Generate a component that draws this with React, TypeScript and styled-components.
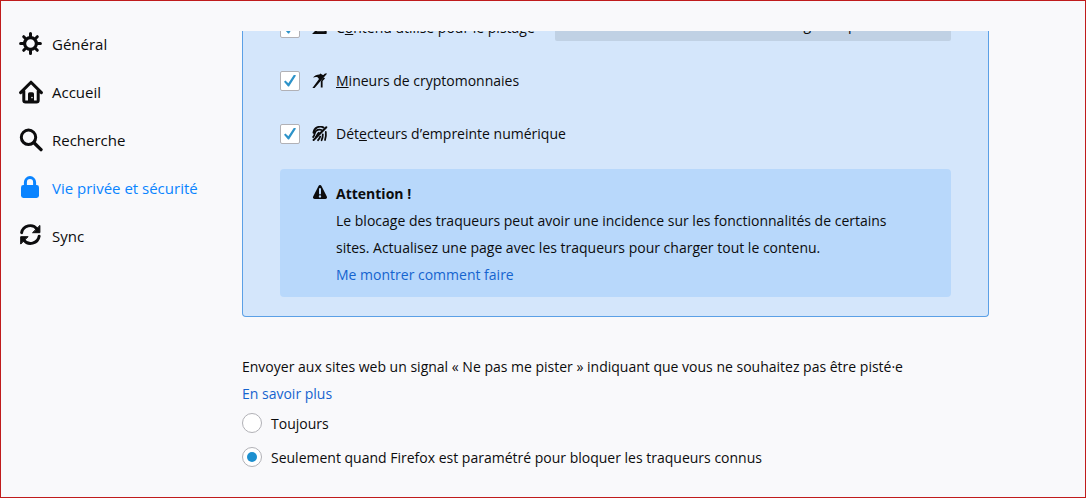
import React from "react";
import styled, { createGlobalStyle } from "styled-components";

const GlobalStyle = createGlobalStyle`
  * { box-sizing: border-box; }
  body {
    margin: 0;
    background: #f9f9fb;
    color: #0c0c0d;
    font-family: "Segoe UI", "Open Sans", "Noto Sans", sans-serif;
    font-size: 14px;
    line-height: 27px;
  }
`;

const Page = styled.div`
  display: flex;
  min-height: 100vh;
  border: 1px solid #c01c1c;
`;

const Sidebar = styled.nav`
  flex: 0 0 241px;
  display: flex;
  flex-direction: column;
  padding: 19px 0 0 18px;
`;

const NavLink = styled.a<{ $active?: boolean }>`
  display: flex;
  align-items: center;
  gap: 9px;
  height: 48px;
  font-size: 15px;
  text-decoration: none;
  color: ${(p) => (p.$active ? "#0a84ff" : "#0c0c0d")};
`;

const Main = styled.main`
  flex: 1;
  min-width: 0;
  padding: 30px 96px 20px 0;
`;

const Panel = styled.section`
  overflow: hidden;
  padding: 0 37px 19px;
  border: 1px solid #5ba0e6;
  border-top: 0;
  border-radius: 0 0 4px 4px;
  background: #d4e6fb;
`;

const OptionList = styled.div`
  margin-top: -30px;
`;

const Option = styled.div`
  display: flex;
  align-items: center;
  height: 53px;
`;

const Label = styled.label`
  display: flex;
  align-items: center;
  gap: 8px;
`;

const Checkbox = styled.input`
  appearance: none;
  flex: none;
  width: 20px;
  height: 20px;
  margin: 0 12px 0 0;
  border: 1px solid #b1b1b6;
  border-radius: 2px;
  background: #fff;
  display: grid;
  place-items: center;

  &:checked::before {
    content: "";
    width: 12px;
    height: 12px;
    background: #2e93c9;
    clip-path: polygon(0 60%, 12% 49%, 36% 73%, 84% 0, 100% 9%, 42% 100%, 34% 100%);
  }
`;

const Select = styled.select`
  appearance: none;
  flex: 0 1 396px;
  min-width: 0;
  height: 32px;
  margin: 0 0 6px auto;
  padding: 0 0 0 85px;
  border: 0;
  border-radius: 2px;
  background: #c0d1e4;
  color: #0c0c0d;
  font: inherit;
  line-height: 24px;
`;

const Callout = styled.div`
  display: flex;
  gap: 8px;
  margin-top: 9px;
  padding: 11px 40px 9px 32px;
  border-radius: 4px;
  background: #b8d8fb;

  svg { flex: none; margin-top: 4px; }
  p { margin: 0; }
`;

const CalloutTitle = styled.strong`
  display: block;
  font-weight: 700;
`;

const Link = styled.a`
  color: #1564cf;
  text-decoration: none;
`;

const Tracking = styled.fieldset`
  margin: 36px 0 0;
  padding: 0;
  border: 0;
`;

const Legend = styled.legend`
  padding: 0;
`;

const RadioGroup = styled.div`
  display: flex;
  flex-direction: column;
  gap: 2px;
`;

const RadioLabel = styled.label`
  display: flex;
  align-items: center;
  gap: 9px;
  height: 32px;
`;

const Radio = styled.input`
  appearance: none;
  flex: none;
  width: 20px;
  height: 20px;
  margin: 0;
  border: 1px solid #b1b1b6;
  border-radius: 50%;
  background: #fff;
  display: grid;
  place-items: center;

  &:checked::before {
    content: "";
    width: 10px;
    height: 10px;
    border-radius: 50%;
    background: #1c8fcf;
  }
`;

const Svg = ({ size, children }: { size: number; children: React.ReactNode }) => (
  <svg width={size} height={size} viewBox={`0 0 ${size} ${size}`} fill="none" stroke="currentColor"
    strokeLinecap="round" strokeLinejoin="round" aria-hidden="true">
    {children}
  </svg>
);

const GearIcon = () => (
  <Svg size={24}>
    <circle cx="11.5" cy="11.5" r="5.9" strokeWidth="3.2" />
    <path strokeWidth="3" d="M11.5 1.6v3M11.5 18.4v3M1.6 11.5h3M18.4 11.5h3M4.7 4.7l1.8 1.8M16.5 16.5l1.8 1.8M4.7 18.3l1.8-1.8M16.5 6.5l1.8-1.8" />
  </Svg>
);

const HomeIcon = () => (
  <Svg size={24}>
    <path strokeWidth="3" d="M1.6 12.6 12 2.2l10.4 10.4M4.8 11v9.2a1.7 1.7 0 0 0 1.7 1.7h11a1.7 1.7 0 0 0 1.7-1.7V11" />
    <path fill="currentColor" stroke="none" d="M9 22v-8.2a1.6 1.6 0 0 1 1.6-1.6h2.8a1.6 1.6 0 0 1 1.6 1.6V22z" />
    <circle cx="13" cy="17.6" r="0.8" fill="#f9f9fb" stroke="none" />
  </Svg>
);

const SearchIcon = () => (
  <Svg size={24}>
    <circle cx="9.5" cy="9.3" r="7.2" strokeWidth="3" />
    <path strokeWidth="3.4" d="m15 14.8 7 6.8" />
  </Svg>
);

const LockIcon = () => (
  <Svg size={24}>
    <path strokeWidth="3" strokeLinecap="butt" d="M6.4 11V6.2a4.6 4.6 0 0 1 9.2 0V11" />
    <rect x="2" y="9" width="18" height="13" rx="2.4" fill="currentColor" stroke="none" />
  </Svg>
);

const SyncIcon = () => (
  <Svg size={24}>
    <path strokeWidth="2.9" d="M2.6 8.7a8.7 8.7 0 0 1 15.6-3.4M20.2 12.1a8.7 8.7 0 0 1-15.6 3.8" />
    <path fill="currentColor" strokeWidth="1" d="M20.9 1.8v6.9h-7zM1.7 19.7v-7h7z" />
  </Svg>
);

const ContentIcon = () => (
  <Svg size={16}>
    <path strokeWidth="2" d="M5 12.5h8.5V4M2 4v6" />
    <path fill="currentColor" stroke="none" d="M0 14 5 9v2.5h9.5V14z" />
  </Svg>
);

const MinerIcon = () => (
  <Svg size={16}>
    <path fill="currentColor" stroke="none" d="M1 4.6C2.6 2.2 5 1.4 7.4 1.4L8.6.6l1.6 1.2 1.2.2L13 .4h2.2L2.6 15H.4L7 6 5.6 4.2C4 3.8 2.6 4 1 4.6z" />
    <path fill="currentColor" stroke="none" d="m10 6.6 1.6-2c.6 0 1 .2 1.4.8L10.6 8v6.4H8.8V8.2z" />
  </Svg>
);

const FingerprintIcon = () => (
  <Svg size={16}>
    <path strokeWidth="1.8" d="M1.4 6.8A6.8 6.8 0 0 1 11.6 1.6M1.2 11c1.4-1.4 1.4-3.2 1.8-4.4A5 5 0 0 1 9.6 4M4 11C5.4 9.6 5.2 7.8 6.8 6.8" />
    <path strokeWidth="2" d="M14.3 1.2 1.6 14" />
    <path strokeWidth="1.8" d="M6 14.2c1.2-1 1.8-2.2 2.2-3.6M9.6 14.2c.8-1.6 1.2-3.2 1.2-5.8M13 14c.8-2.4 1.2-5 .8-8" />
  </Svg>
);

const WarningIcon = () => (
  <svg width="16" height="16" viewBox="0 0 16 16" aria-hidden="true">
    <path fill="currentColor" fillRule="evenodd" d="M6.5 1.9a1.7 1.7 0 0 1 3 0l5.3 10.6a1.7 1.7 0 0 1-1.5 2.5H2.7a1.7 1.7 0 0 1-1.5-2.5zM7 5v4.5a1 1 0 0 0 2 0V5a1 1 0 0 0-2 0zm1 6.2a1.2 1.2 0 1 0 0 2.4 1.2 1.2 0 0 0 0-2.4z" />
  </svg>
);

const navItems = [
  { label: "Général", Icon: GearIcon },
  { label: "Accueil", Icon: HomeIcon },
  { label: "Recherche", Icon: SearchIcon },
  { label: "Vie privée et sécurité", Icon: LockIcon, active: true },
  { label: "Sync", Icon: SyncIcon },
];

export default function App() {
  return (
    <>
      <GlobalStyle />
      <Page>
        <Sidebar>
          {navItems.map(({ label, Icon, active }) => (
            <NavLink key={label} href="#" $active={active}>
              <Icon />
              {label}
            </NavLink>
          ))}
        </Sidebar>
        <Main>
          <Panel>
            <OptionList>
              <Option>
                <Checkbox type="checkbox" id="content" defaultChecked />
                <Label htmlFor="content">
                  <ContentIcon />
                  <span>C<u>o</u>ntenu utilisé pour le pistage</span>
                </Label>
                <Select aria-label="Contenu utilisé pour le pistage">
                  <option>Dans les fenêtres de navigation privée</option>
                </Select>
              </Option>
              <Option>
                <Checkbox type="checkbox" id="miners" defaultChecked />
                <Label htmlFor="miners">
                  <MinerIcon />
                  <span><u>M</u>ineurs de cryptomonnaies</span>
                </Label>
              </Option>
              <Option>
                <Checkbox type="checkbox" id="fingerprints" defaultChecked />
                <Label htmlFor="fingerprints">
                  <FingerprintIcon />
                  <span>Dét<u>e</u>cteurs d’empreinte numérique</span>
                </Label>
              </Option>
            </OptionList>
            <Callout>
              <WarningIcon />
              <div>
                <CalloutTitle>Attention !</CalloutTitle>
                <p>
                  Le blocage des traqueurs peut avoir une incidence sur les fonctionnalités de certains
                  sites. Actualisez une page avec les traqueurs pour charger tout le contenu.
                </p>
                <Link href="#">Me montrer comment faire</Link>
              </div>
            </Callout>
          </Panel>
          <Tracking>
            <Legend>
              Envoyer aux sites web un signal « Ne pas me pister » indiquant que vous ne souhaitez pas être pisté·e
            </Legend>
            <Link href="#">En savoir plus</Link>
            <RadioGroup>
              <RadioLabel>
                <Radio type="radio" name="dnt" />
                Toujours
              </RadioLabel>
              <RadioLabel>
                <Radio type="radio" name="dnt" defaultChecked />
                Seulement quand Firefox est paramétré pour bloquer les traqueurs connus
              </RadioLabel>
            </RadioGroup>
          </Tracking>
        </Main>
      </Page>
    </>
  );
}
